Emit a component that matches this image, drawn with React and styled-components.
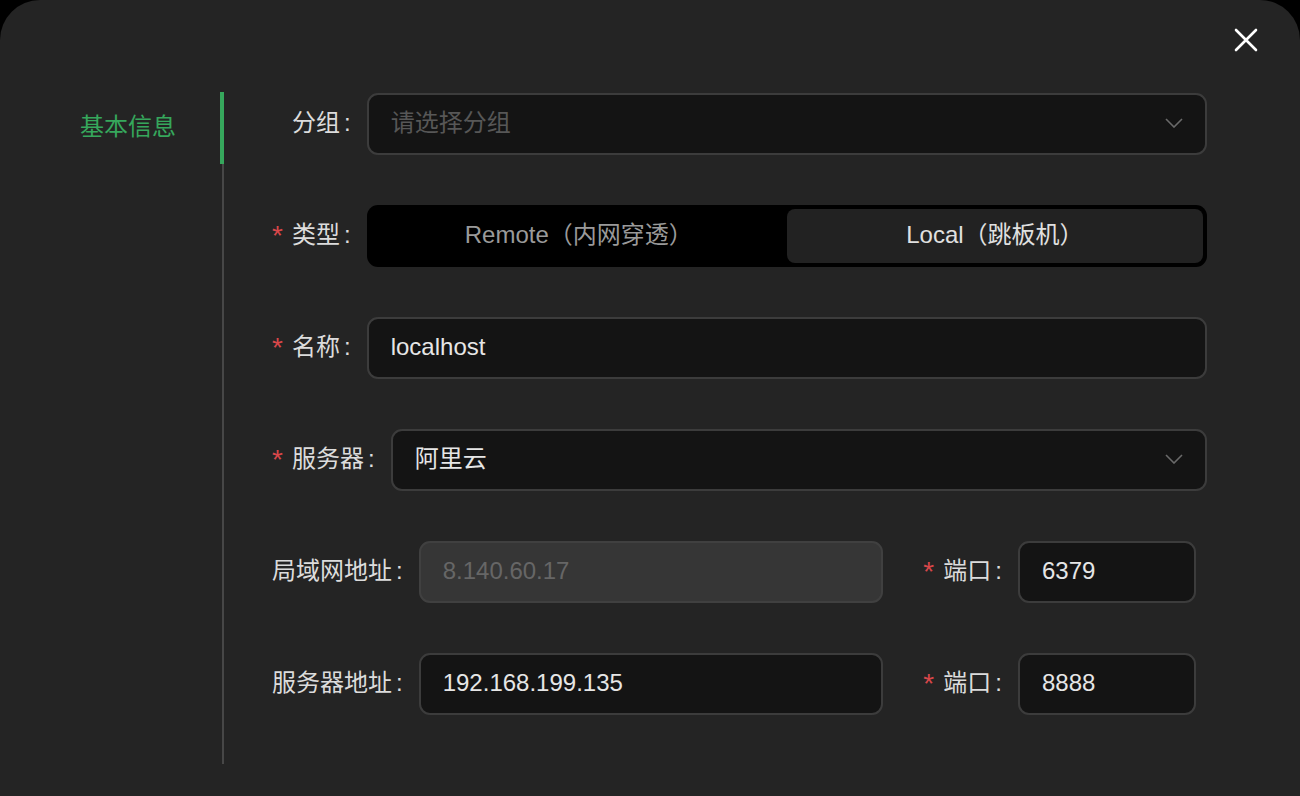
import * as React from 'react';
import styled, { createGlobalStyle } from 'styled-components';

const GlobalStyle = createGlobalStyle`
  html, body {
    margin: 0;
    padding: 0;
    background: #000;
    overflow: hidden;
  }
  body {
    font-family: "Liberation Sans", "Noto Sans CJK SC", sans-serif;
  }
`;

const Dialog = styled.div`
  position: relative;
  width: 1300px;
  height: 796px;
  box-sizing: border-box;
  background: #242424;
  border-radius: 40px 40px 0 0;
  display: flex;
  padding-top: 92px;
  color: #dcdcdc;
  font-size: 24px;
  line-height: 1;
`;

const CloseButton = styled.button`
  position: absolute;
  top: 26px;
  right: 40px;
  width: 28px;
  height: 28px;
  padding: 0;
  background: none;
  border: 0;
  display: flex;
  align-items: center;
  justify-content: center;
`;

const Sidebar = styled.nav`
  width: 224px;
  height: 672px;
  flex-shrink: 0;
  box-sizing: border-box;
  border-right: 2px solid #474747;
`;

const Tab = styled.div`
  position: relative;
  height: 72px;
  display: flex;
  align-items: center;
  padding-left: 80px;
  padding-bottom: 2px;
  box-sizing: border-box;
  font-size: 24px;
  color: ${p => (p.active ? '#36a75c' : '#bbb')};
  &::after {
    content: '';
    display: ${p => (p.active ? 'block' : 'none')};
    position: absolute;
    right: -2px;
    top: 0;
    width: 4px;
    height: 72px;
    background: #36a75c;
  }
`;

const Form = styled.div`
  flex: 1;
  padding: 1px 93px 0 48px;
  display: flex;
  flex-direction: column;
  gap: 50px;
`;

const Row = styled.div`
  display: flex;
  align-items: center;
  height: 62px;
  padding-right: ${p => p.inset || 0}px;
  gap: 40px;
`;

const Field = styled.div`
  display: flex;
  align-items: center;
  flex: ${p => (p.width ? '0 0 auto' : 1)};
  min-width: 0;
`;

const Label = styled.label`
  display: flex;
  align-items: center;
  flex-shrink: 0;
  padding-left: ${p => (p.indent ? 20 : 0)}px;
  padding-bottom: 2px;
  color: #dcdcdc;
  white-space: nowrap;
`;

const Required = styled.span`
  width: 20px;
  color: #d9474a;
  font-size: 28px;
  line-height: 1;
  margin-top: 2px;
`;

const Colon = styled.span`
  margin: 0 16px 0 4px;
`;

const Control = styled.div`
  box-sizing: border-box;
  height: 62px;
  width: ${p => (p.width ? `${p.width}px` : 'auto')};
  flex: ${p => (p.width ? '0 0 auto' : 1)};
  display: flex;
  align-items: center;
  justify-content: space-between;
  padding: 0 22px 2px;
  border: 2px solid ${p => (p.disabled ? '#404040' : '#3c3c3c')};
  border-radius: 11px;
  background: ${p => (p.disabled ? '#363636' : '#141414')};
  color: ${p => (p.disabled ? '#666' : p.placeholder ? '#575757' : '#e6e6e6')};
  font-size: 24px;
`;

const Segmented = styled.div`
  flex: 1;
  height: 62px;
  box-sizing: border-box;
  padding: 4px;
  display: flex;
  background: #000;
  border-radius: 11px;
`;

const Segment = styled.div`
  flex: 1;
  display: flex;
  align-items: center;
  justify-content: center;
  padding-bottom: 2px;
  border-radius: 8px;
  background: ${p => (p.selected ? '#222' : 'transparent')};
  color: ${p => (p.selected ? '#e0e0e0' : '#9a9a9a')};
  font-size: 24px;
`;

const Chevron = () => (
  <svg width="18" height="10" viewBox="0 0 18 10" fill="none">
    <path d="M1 1l8 8 8-8" stroke="#6a6a6a" strokeWidth="1.6" />
  </svg>
);

const FieldLabel = ({ required, indent, children }) => (
  <Label indent={indent}>
    {required && <Required>*</Required>}
    {children}
    <Colon>:</Colon>
  </Label>
);

export default function App() {
  return (
    <React.Fragment>
      <GlobalStyle />
      <Dialog>
        <CloseButton type="button" aria-label="close">
          <svg width="24" height="24" viewBox="0 0 24 24">
            <path d="M2 2l20 20M22 2L2 22" stroke="#fff" strokeWidth="2.6" strokeLinecap="round" />
          </svg>
        </CloseButton>
        <Sidebar>
          <Tab active>基本信息</Tab>
        </Sidebar>
        <Form>
          <Row>
            <Field>
              <FieldLabel indent>分组</FieldLabel>
              <Control placeholder="true">
                请选择分组
                <Chevron />
              </Control>
            </Field>
          </Row>
          <Row>
            <Field>
              <FieldLabel required>类型</FieldLabel>
              <Segmented>
                <Segment>Remote（内网穿透）</Segment>
                <Segment selected>Local（跳板机）</Segment>
              </Segmented>
            </Field>
          </Row>
          <Row>
            <Field>
              <FieldLabel required>名称</FieldLabel>
              <Control>localhost</Control>
            </Field>
          </Row>
          <Row>
            <Field>
              <FieldLabel required>服务器</FieldLabel>
              <Control>
                阿里云
                <Chevron />
              </Control>
            </Field>
          </Row>
          <Row inset={11}>
            <Field>
              <FieldLabel>局域网地址</FieldLabel>
              <Control disabled>8.140.60.17</Control>
            </Field>
            <Field width>
              <FieldLabel required>端口</FieldLabel>
              <Control width={178}>6379</Control>
            </Field>
          </Row>
          <Row inset={11}>
            <Field>
              <FieldLabel>服务器地址</FieldLabel>
              <Control>192.168.199.135</Control>
            </Field>
            <Field width>
              <FieldLabel required>端口</FieldLabel>
              <Control width={178}>8888</Control>
            </Field>
          </Row>
        </Form>
      </Dialog>
    </React.Fragment>
  );
}
